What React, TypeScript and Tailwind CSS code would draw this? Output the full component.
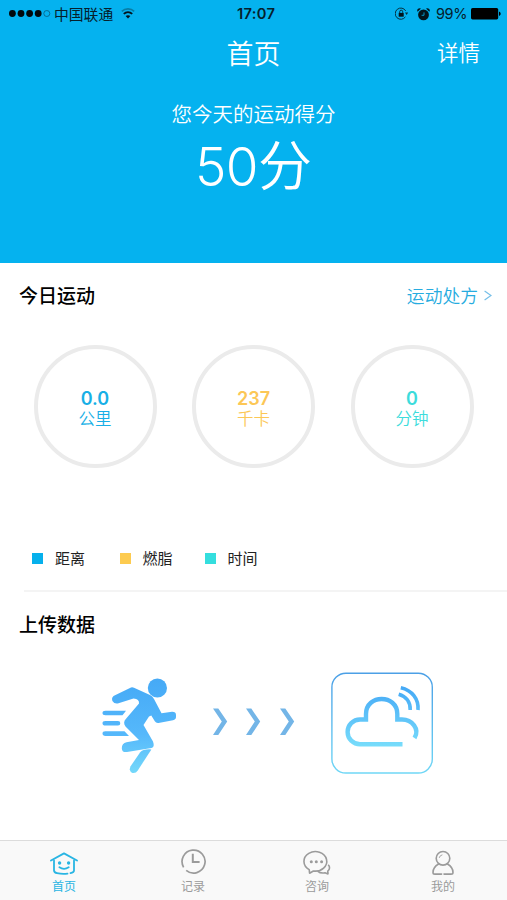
import React from 'react';

interface Ring {
  value: string;
  unit: string;
  color: string;
}

interface LegendItem {
  label: string;
  swatch: string;
  gap: string;
}

const rings: Ring[] = [
  { value: '0.0', unit: '公里', color: 'text-[#18afe6]' },
  { value: '237', unit: '千卡', color: 'text-[#fcc756]' },
  { value: '0', unit: '分钟', color: 'text-[#3ddcdc]' },
];

const legend: LegendItem[] = [
  { label: '距离', swatch: 'bg-[#06b0ec]', gap: 'w-[87.5px]' },
  { label: '燃脂', swatch: 'bg-[#fdcb50]', gap: 'w-[85px]' },
  { label: '时间', swatch: 'bg-[#34dede]', gap: 'w-[80px]' },
];

// ---------------------------------------------------------------------------
// Status bar
// ---------------------------------------------------------------------------

const StatusBar = () => (
  <div className="relative flex h-7 items-center justify-between pr-[6px] pl-[9px] text-[#06202c]">
    <div className="flex items-center">
      <svg width="42" height="8" viewBox="0 0 42 8" fill="#02090d">
        <circle cx="3.4" cy="3.5" r="3.4" />
        <circle cx="12" cy="3.5" r="3.4" />
        <circle cx="20.6" cy="3.5" r="3.4" />
        <circle cx="29.2" cy="3.5" r="3.4" />
        <circle cx="37.8" cy="3.5" r="3" fill="none" stroke="#075d7d" strokeWidth="0.8" />
      </svg>
      <span className="ml-[3px] pt-px text-[14.8px] leading-7">中国联通</span>
      <svg className="ml-[7px]" width="16" height="12" viewBox="0 0 16 12" fill="none">
        <path d="M1.8 3.3C5.2 .1 10.8 .1 14.2 3.3" stroke="#087da6" strokeWidth="1.6" />
        <path d="M3.8 5.9C6.2 3.5 9.8 3.5 12.2 5.9" stroke="#04151d" strokeWidth="1.9" />
        <path d="M5.6 8.1C7 6.8 9 6.8 10.4 8.1L8 10.5z" fill="#04151d" />
      </svg>
    </div>
    <span className="absolute left-[237px] text-[14.7px] leading-7 font-semibold tracking-[0.3px]">17:07</span>
    <div className="flex items-center">
      <svg width="14" height="14" viewBox="0 0 14 14" fill="none" stroke="#06303f">
        <path d="M10.7 3.9A5.6 5.6 0 1 0 10.4 9.9" strokeWidth="1" />
        <path d="M10 5.6h3.2l-1.6 2.3z" fill="#06303f" stroke="none" />
        <rect x="3.7" y="5.9" width="5" height="3.8" fill="#02141c" stroke="none" />
        <path d="M4.7 6V4.7a1.5 1.5 0 0 1 3 0v1.2" strokeWidth="1" />
      </svg>
      <svg className="ml-[8px]" width="13" height="13" viewBox="0 0 13 13">
        <circle cx="6.5" cy="6.9" r="5.4" fill="#02141c" />
        <path d="M.6 3.8A2.4 2.4 0 0 1 4 .6zM12.4 3.8A2.4 2.4 0 0 0 9 .6z" fill="#02141c" />
        <path d="M7 4.4v2.9H4.6" fill="none" stroke="#07a2d8" strokeWidth="0.9" />
      </svg>
      <span className="ml-[6px] w-[32px] text-[14.5px] leading-7 tracking-[-0.4px] whitespace-nowrap">99%</span>
      <svg className="ml-[3px]" width="30" height="12" viewBox="0 0 30 12" fill="#000">
        <rect x="0" y="0" width="27.2" height="11.4" rx="1.6" />
        <path d="M28 3.6c2.2.8 2.2 3.6 0 4.4z" />
      </svg>
    </div>
  </div>
);

// ---------------------------------------------------------------------------
// Upload illustrations
// ---------------------------------------------------------------------------

// runner with the three speed lines trailing behind
const Runner = () => (
  <svg width="76" height="98" viewBox="102 678 76 98" fill="none">
    <defs>
      <linearGradient id="run" gradientUnits="userSpaceOnUse" x1="0" y1="678" x2="0" y2="774">
        <stop offset="0" stopColor="#45a9f6" />
        <stop offset="0.6" stopColor="#55b8fb" />
        <stop offset="1" stopColor="#74d8fa" />
      </linearGradient>
    </defs>
    <g fill="url(#run)">
      <circle cx="157.4" cy="689" r="9.6" />
      <path d="M131 688.5Q132.3 688 134 688.7L150 696Q152.5 697 154 700L161.5 714.3L172 712.8Q176 712.7 176 716V718Q176 720.5 173 721.2L158.5 724Q156 724.3 154.8 722.3L151.3 716.6L149 717.4L143.5 726L153 742.5Q155 748 151.5 749L127 753Q122 753.8 121.8 749.2Q121.8 744.5 126.5 743.3L139 741L125.5 727.5Q122.5 723.5 126 719.8L139 704.5Q139.5 700.2 133.5 699.6L118.5 704.3Q114.5 705.3 112.4 702Q110.8 697.8 115.5 696Z" />
      <path d="M140 753.5Q143 749.8 151.4 750.4L137.8 771.4Q135.5 774.8 131.8 773.7Q128.5 771.7 130.6 767.2Z" />
      <path d="M105.5 711.7H126L122.5 716.2H105.5Q102.5 716.2 102.5 714T105.5 711.7ZM105.5 722H118Q120.3 722 120.3 724.2T118 726.5H105.5Q102.5 726.5 102.5 724.2T105.5 722ZM105.5 732.2H124.5L129 736.9H105.5Q102.5 736.9 102.5 734.5T105.5 732.2Z" />
    </g>
  </svg>
);

const Arrow = () => (
  <svg width="15" height="28" viewBox="0 0 15 28" fill="#73b5e7">
    <path d="M0 .5h5.3L14.2 13.6 5.3 27H0L8.8 13.6z" />
  </svg>
);

const CloudUpload = () => (
  <svg width="102" height="102" viewBox="331 672 102 102" fill="none">
    <defs>
      <linearGradient id="frame" gradientUnits="userSpaceOnUse" x1="0" y1="672" x2="0" y2="774">
        <stop offset="0" stopColor="#4b9fe6" />
        <stop offset="1" stopColor="#6fd7f6" />
      </linearGradient>
      <linearGradient id="cloud" gradientUnits="userSpaceOnUse" x1="0" y1="686" x2="0" y2="747">
        <stop offset="0" stopColor="#44a8f6" />
        <stop offset="1" stopColor="#78ddfb" />
      </linearGradient>
    </defs>
    <rect x="331.9" y="673.2" width="100.4" height="99.8" rx="14" stroke="url(#frame)" strokeWidth="1.4" />
    <g stroke="url(#cloud)">
      <path d="M402.5 744.3H360A12.4 12.4 0 0 1 360 719.5H366V714C366 694 397.3 694 397.3 714V719.5H402C412 719.5 420 729 414.5 738" strokeWidth="4.4" />
      <path d="M398.7 694.2C406 696.3 410.6 702 410.2 710" strokeWidth="3.6" />
      <path d="M400.8 687.8C412 690.3 418.8 699 418 710" strokeWidth="3.6" />
    </g>
  </svg>
);

// ---------------------------------------------------------------------------
// Tab bar icons
// ---------------------------------------------------------------------------

const HomeIcon = () => (
  <svg width="28" height="28" viewBox="0 0 28 28" fill="none" stroke="currentColor" strokeWidth="1.8" strokeLinecap="round">
    <path d="M1 12.5 14 5.4 27 12.5" strokeLinejoin="round" />
    <path d="M4 12.5V22.5Q4.3 24.6 7 25.2Q12.5 26.3 17.5 25.6M20.5 25.1Q24 24.6 24 22.5V12.5" />
    <path d="M9.4 19.3Q14 22.3 18.7 19.3" />
    <circle cx="9.6" cy="15" r="0.8" fill="currentColor" />
    <circle cx="18.6" cy="15" r="0.8" fill="currentColor" />
  </svg>
);

const ClockIcon = () => (
  <svg width="28" height="28" viewBox="0 0 28 28" fill="none" stroke="currentColor">
    <path d="M4.6 19.3A11.5 11.5 0 1 1 7.2 22.4" strokeWidth="1.7" />
    <path d="M13.8 5.7V14H20.6" strokeWidth="2" />
  </svg>
);

const ChatIcon = () => (
  <svg width="28" height="28" viewBox="0 0 28 28" fill="none" stroke="currentColor" strokeWidth="1.6" strokeLinejoin="round">
    <path d="M6.2 21.6A11.4 9.8 0 1 1 10.4 23L6.6 25.2z" />
    <path d="M25.2 16.8C27.2 18.8 26.9 21.3 24.8 23.1L25 25.9 22 24.8C19.3 25.4 16.5 24.8 14.6 23.1" />
    <circle cx="8.3" cy="13.8" r="1.5" fill="currentColor" stroke="none" />
    <circle cx="13.3" cy="13.8" r="1.5" fill="currentColor" stroke="none" />
    <circle cx="18.6" cy="13.8" r="1.5" fill="currentColor" stroke="none" />
  </svg>
);

const UserIcon = () => (
  <svg width="28" height="28" viewBox="0 0 28 28" fill="none" stroke="currentColor" strokeWidth="1.6" strokeLinecap="round">
    <circle cx="14" cy="10.3" r="6.8" />
    <path d="M10.3 9.5Q10.8 7.3 13 6.9" strokeWidth="0.9" />
    <path d="M9.6 16C6.3 17.9 4 21.2 4 24.4Q4 26.1 5.8 26.1H12.6M15 26.1H22Q24 26.1 24 24.4C24 21.2 21.7 17.9 18.4 16" />
  </svg>
);

const tabs = [
  { label: '首页', icon: HomeIcon, color: 'text-[#29b5e3]', width: 'w-[128px]' },
  { label: '记录', icon: ClockIcon, color: 'text-[#9b9b9b]', width: 'w-[130px]' },
  { label: '咨询', icon: ChatIcon, color: 'text-[#9b9b9b]', width: 'w-[118px]' },
  { label: '我的', icon: UserIcon, color: 'text-[#9b9b9b]', width: 'w-[134px]' },
];

export default function App() {
  return (
    <div className="flex h-[900px] w-[507px] flex-col overflow-hidden bg-white font-['Inter','Noto_Sans_CJK_SC',sans-serif] text-black">
      <header className="h-[263px] bg-[#05b2ef] text-white">
        <StatusBar />
        <div className="relative flex h-[50px] items-center justify-center">
          <h1 className="pt-[3px] text-[27px] leading-[50px] font-[350]">首页</h1>
          <span className="absolute right-[27px] text-[21.5px] leading-[50px] font-[350]">详情</span>
        </div>
        <p className="mt-[22px] text-center text-[20.5px] leading-[30px] font-[350]">您今天的运动得分</p>
        <p className="mt-px flex items-center justify-center leading-[70px]">
          <span className="text-[53px] font-[350] tracking-[-0.5px]">50</span>
          <span className="pt-px text-[54px] font-[350]">分</span>
        </p>
      </header>

      <section className="h-[327px]">
        <div className="flex h-[64px] items-center justify-between pt-[4px] pr-[15px] pl-[19px]">
          <h2 className="text-[19px] font-medium">今日运动</h2>
          <div className="flex items-center text-[#27ace0]">
            <span className="text-[17.8px] font-[350]">运动处方</span>
            <svg className="mb-[3px] ml-[6px]" width="8" height="11" viewBox="0 0 8 11" fill="none" stroke="#76bfe8" strokeWidth="1.2">
              <path d="M.6 1 7 5.5.6 10" />
            </svg>
          </div>
        </div>
        <div className="mt-[18px] flex justify-between pr-[33.5px] pl-[33.5px]">
          {rings.map((ring) => (
            <div
              key={ring.unit}
              className={`flex h-[123px] w-[123px] flex-col items-center rounded-full border-4 border-[#ebebeb] pt-[39px] ${ring.color}`}
            >
              <span className="text-[18px] leading-[21px] font-semibold">{ring.value}</span>
              <span className="text-[16.5px] leading-[21px] font-[350]">{ring.unit}</span>
            </div>
          ))}
        </div>
        <div className="mt-[80px] flex h-[22px] pl-[32px]">
          {legend.map((item) => (
            <div key={item.label} className={`flex items-center ${item.gap}`}>
              <span className={`mb-[2px] h-[11px] w-[11px] ${item.swatch}`} />
              <span className="ml-[12px] text-[15px] text-[#222]">{item.label}</span>
            </div>
          ))}
        </div>
      </section>

      <section className="flex-1">
        <div className="ml-[24px] h-[2px] bg-[#f4f4f4]" />
        <h2 className="mt-[19px] pl-[19px] text-[19px] leading-[29px] font-medium">上传数据</h2>
        <div className="mt-[32px] flex h-[102px] items-center pl-[102px]">
          <div className="pt-[6px]">
            <Runner />
          </div>
          <div className="ml-[34.5px] flex gap-[18.5px] pb-[2px]">
            <Arrow />
            <Arrow />
            <Arrow />
          </div>
          <div className="ml-[36.5px]">
            <CloudUpload />
          </div>
        </div>
      </section>

      <nav className="flex h-[60px] border-t border-[#dcdcdc] bg-[#f9f9f9]">
        {tabs.map(({ label, icon: Icon, color, width }) => (
          <div key={label} className={`flex shrink-0 flex-col items-center pt-[7px] ${color} ${width}`}>
            <Icon />
            <span className="mt-[2px] text-[12px] leading-[18px]">{label}</span>
          </div>
        ))}
      </nav>
    </div>
  );
}
